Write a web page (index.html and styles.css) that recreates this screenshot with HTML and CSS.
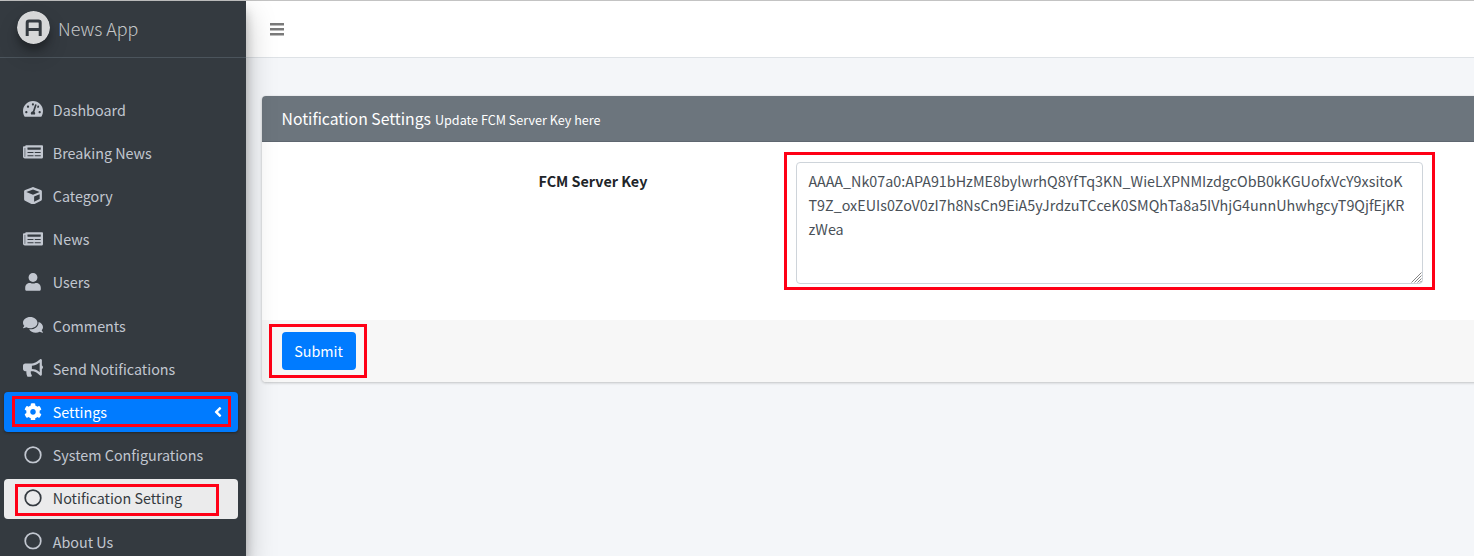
FILE: index.html
```html
<!DOCTYPE html>
<html lang="en">
<head>
<meta charset="utf-8">
<title>News App</title>
<link rel="stylesheet" href="styles.css">
</head>
<body>
<svg class="defs" width="0" height="0" aria-hidden="true">
  <symbol id="newspaper" viewBox="0 0 576 512"><path d="M552 64H88c-13.255 0-24 10.745-24 24v8H24c-13.255 0-24 10.745-24 24v272c0 30.928 25.072 56 56 56h472c26.51 0 48-21.49 48-48V88c0-13.255-10.745-24-24-24zM56 400a8 8 0 0 1-8-8V144h16v248a8 8 0 0 1-8 8zm236-16H140c-6.627 0-12-5.373-12-12v-8c0-6.627 5.373-12 12-12h152c6.627 0 12 5.373 12 12v8c0 6.627-5.373 12-12 12zm208 0H348c-6.627 0-12-5.373-12-12v-8c0-6.627 5.373-12 12-12h152c6.627 0 12 5.373 12 12v8c0 6.627-5.373 12-12 12zm-208-96H140c-6.627 0-12-5.373-12-12v-8c0-6.627 5.373-12 12-12h152c6.627 0 12 5.373 12 12v8c0 6.627-5.373 12-12 12zm208 0H348c-6.627 0-12-5.373-12-12v-8c0-6.627 5.373-12 12-12h152c6.627 0 12 5.373 12 12v8c0 6.627-5.373 12-12 12zm0-96H140c-6.627 0-12-5.373-12-12v-40c0-6.627 5.373-12 12-12h360c6.627 0 12 5.373 12 12v40c0 6.627-5.373 12-12 12z"/></symbol>
  <symbol id="circle" viewBox="0 0 512 512"><circle cx="256" cy="256" r="224" fill="none" stroke="currentColor" stroke-width="50"/></symbol>
</svg>
<div class="app">
  <aside class="sidebar">
    <div class="brand">
      <svg class="logo" viewBox="0 0 33 33"><circle cx="16.5" cy="16.5" r="16.5" fill="#d6d7d8"/><path d="M10.2 25V11.9q0-1.8 1.8-1.8h9.4q1.8 0 1.8 1.8V25M10.2 18.4h13" fill="none" stroke="#343a40" stroke-width="3"/></svg>
      <span class="brand-text">News App</span>
    </div>
    <nav class="menu">
      <a class="item"><svg class="icon" viewBox="0 0 576 512"><path d="M288 32C128.94 32 0 160.94 0 320c0 52.8 14.25 102.26 39.06 144.8 5.61 9.62 16.3 15.2 27.44 15.2h443c11.14 0 21.83-5.58 27.44-15.2C561.75 422.26 576 372.8 576 320c0-159.06-128.94-288-288-288zm0 64c14.71 0 26.58 10.13 30.32 23.65-1.11 2.26-2.64 4.23-3.45 6.67l-9.22 27.67c-5.13 3.49-10.97 6.01-17.64 6.01-17.67 0-32-14.33-32-32S270.33 96 288 96zM96 384c-17.67 0-32-14.33-32-32s14.33-32 32-32 32 14.33 32 32-14.33 32-32 32zm48-160c-17.67 0-32-14.33-32-32s14.33-32 32-32 32 14.33 32 32-14.33 32-32 32zm246.77-72.41l-61.33 184C343.13 347.33 352 364.54 352 384c0 11.72-3.38 22.55-8.88 32H232.88c-5.5-9.45-8.88-20.28-8.88-32 0-33.94 26.5-61.43 59.9-63.59l61.34-184.01c4.17-12.56 17.73-19.45 30.36-15.17 12.57 4.19 19.35 17.79 15.17 30.36zm14.66 57.2l15.52-46.55c3.47-1.29 7.13-2.23 11.05-2.23 17.67 0 32 14.33 32 32s-14.33 32-32 32c-11.38-.01-20.89-6.28-26.57-15.22zM480 384c-17.67 0-32-14.33-32-32s14.33-32 32-32 32 14.33 32 32-14.33 32-32 32z"/></svg><span>Dashboard</span></a>
      <a class="item"><svg class="icon"><use href="#newspaper"/></svg><span>Breaking News</span></a>
      <a class="item"><svg class="icon" viewBox="0 0 512 512"><path d="M239.1 6.3l-208 78c-18.7 7-31.1 25-31.1 45v225.1c0 18.2 10.3 34.8 26.5 42.9l208 104c13.5 6.8 29.4 6.8 42.9 0l208-104c16.3-8.1 26.5-24.8 26.5-42.9V129.3c0-20-12.4-37.9-31.1-44.9l-208-78C262 2.2 250 2.2 239.1 6.3zM256 68.4l192 72v1.1l-192 78-192-78v-1.1l192-72zm32 356V275.5l160-65v133.9l-160 80z"/></svg><span>Category</span></a>
      <a class="item"><svg class="icon"><use href="#newspaper"/></svg><span>News</span></a>
      <a class="item"><svg class="icon" viewBox="0 0 448 512"><path d="M224 256c70.7 0 128-57.3 128-128S294.7 0 224 0 96 57.3 96 128s57.3 128 128 128zm89.6 32h-16.7c-22.2 10.2-46.9 16-72.9 16s-50.6-5.8-72.9-16h-16.7C60.2 288 0 348.2 0 422.4V464c0 26.5 21.5 48 48 48h352c26.5 0 48-21.5 48-48v-41.6c0-74.2-60.2-134.4-134.4-134.4z"/></svg><span>Users</span></a>
      <a class="item"><svg class="icon" viewBox="0 0 576 512"><path d="M416 192c0-88.4-93.1-160-208-160S0 103.6 0 192c0 34.3 14.1 65.9 38 92-13.4 30.2-35.5 54.2-35.8 54.5-2.2 2.3-2.8 5.7-1.5 8.7S4.8 352 8 352c36.6 0 66.9-12.3 88.7-25 32.2 15.7 70.3 25 111.3 25 114.9 0 208-71.6 208-160zm122 220c23.9-26 38-57.7 38-92 0-66.9-53.5-124.2-129.3-148.1.9 6.6 1.3 13.3 1.3 20.1 0 105.9-107.7 192-240 192-10.8 0-21.3-.8-31.7-1.9C207.8 439.6 281.8 480 368 480c41 0 79.1-9.2 111.3-25 21.8 12.7 52.1 25 88.7 25 3.2 0 6.1-1.9 7.3-4.8 1.3-2.9.7-6.3-1.5-8.7-.3-.3-22.4-24.2-35.8-54.5z"/></svg><span>Comments</span></a>
      <a class="item"><svg class="icon" viewBox="0 0 576 512"><path d="M576 240c0-23.63-12.95-44.04-32-55.12V32.01C544 23.26 537.02 0 512 0c-7.12 0-14.19 2.38-19.98 7.02l-85.03 68.03C364.28 109.19 310.66 128 256 128H64c-35.35 0-64 28.65-64 64v96c0 35.35 28.65 64 64 64h33.7c-1.39 10.48-2.18 21.14-2.18 32 0 39.77 9.26 77.35 25.56 110.94 5.19 10.69 16.52 17.06 28.4 17.06h74.28c26.05 0 41.69-29.84 25.9-50.56-16.4-21.52-26.15-48.36-26.15-77.44 0-11.11 1.62-21.79 4.41-32H256c54.66 0 108.28 18.81 150.98 52.95l85.03 68.03a32.023 32.023 0 0 0 19.98 7.02c24.92 0 32-22.78 32-32V295.13C563.05 284.04 576 263.63 576 240zm-96 141.42l-33.05-26.44C392.95 311.78 325.12 288 256 288v-96c69.12 0 136.95-23.78 190.95-66.98L480 98.58v282.84z"/></svg><span>Send Notifications</span></a>
      <a class="item active"><svg class="icon" viewBox="0 0 512 512"><path d="M487.4 315.7l-42.6-24.6c4.3-23.2 4.3-47 0-70.2l42.6-24.6c4.9-2.8 7.1-8.6 5.5-14-11.1-35.6-30-67.8-54.7-94.6-3.8-4.1-10-5.1-14.8-2.3L380.8 110c-17.9-15.4-38.5-27.3-60.8-35.1V25.8c0-5.6-3.9-10.5-9.4-11.7-36.7-8.2-74.3-7.8-109.2 0-5.5 1.2-9.4 6.1-9.4 11.7V75c-22.2 7.9-42.8 19.8-60.8 35.1L88.7 85.5c-4.9-2.8-11-1.9-14.8 2.3-24.7 26.7-43.6 58.9-54.7 94.6-1.7 5.4.6 11.2 5.5 14L67.3 221c-4.3 23.2-4.3 47 0 70.2l-42.6 24.6c-4.9 2.8-7.1 8.6-5.5 14 11.1 35.6 30 67.8 54.7 94.6 3.8 4.1 10 5.1 14.8 2.3l42.6-24.6c17.9 15.4 38.5 27.3 60.8 35.1v49.2c0 5.6 3.9 10.5 9.4 11.7 36.7 8.2 74.3 7.8 109.2 0 5.5-1.2 9.4-6.1 9.4-11.7v-49.2c22.2-7.9 42.8-19.8 60.8-35.1l42.6 24.6c4.9 2.8 11 1.9 14.8-2.3 24.7-26.7 43.6-58.9 54.7-94.6 1.5-5.5-.7-11.3-5.6-14.1zM256 336c-44.1 0-80-35.9-80-80s35.9-80 80-80 80 35.9 80 80-35.9 80-80 80z"/></svg><span>Settings</span><svg class="caret" viewBox="0 0 256 512"><path d="M31.7 239l136-136c9.4-9.4 24.6-9.4 33.9 0l22.6 22.6c9.4 9.4 9.4 24.6 0 33.9L127.9 256l96.4 96.4c9.4 9.4 9.4 24.6 0 33.9L201.7 409c-9.4 9.4-24.6 9.4-33.9 0l-136-136c-9.5-9.4-9.5-24.6-.1-34z"/></svg><i class="mark mark-settings"></i></a>
      <a class="item"><svg class="icon"><use href="#circle"/></svg><span>System Configurations</span></a>
      <a class="item current"><svg class="icon"><use href="#circle"/></svg><span>Notification Setting</span><i class="mark mark-notification"></i></a>
      <a class="item"><svg class="icon"><use href="#circle"/></svg><span>About Us</span></a>
    </nav>
  </aside>
  <div class="main">
    <header class="topbar"><svg class="bars" viewBox="0 0 14 13"><path d="M0 0h14v2.4H0zM0 5h14v2.4H0zM0 10h14v2.4H0z"/></svg></header>
    <section class="card">
      <div class="card-header"><span class="title">Notification Settings</span><small>Update FCM Server Key here</small></div>
      <div class="card-body">
        <label class="label" for="key">FCM Server Key</label>
        <div class="field"><textarea id="key" spellcheck="false">AAAA_Nk07a0:APA91bHzME8bylwrhQ8YfTq3KN_WieLXPNMIzdgcObB0kKGUofxVcY9xsitoK
T9Z_oxEUIs0ZoV0zI7h8NsCn9EiA5yJrdzuTCceK0SMQhTa8a5IVhjG4unnUhwhgcyT9QjfEjKR
zWea</textarea><svg class="grip" viewBox="0 0 11 11"><path d="M.5 10.5l10-10M3.5 10.5l7-7M6.5 10.5l4-4M9 10.5l1.5-1.5"/></svg><i class="mark mark-field"></i></div>
      </div>
      <div class="card-footer"><div class="action"><button class="submit">Submit</button><i class="mark mark-submit"></i></div></div>
    </section>
  </div>
</div>
</body>
</html>
```

FILE: styles.css
```css
* { box-sizing: border-box; }
body {
  margin: 0;
  height: 556px;
  overflow: hidden;
  background: #f4f6f9;
  color: #212529;
  font-family: "Source Sans Pro", "Noto Sans CJK SC", sans-serif;
  font-size: 14.33px;
  line-height: 24px;
  white-space: nowrap;
}
.defs { position: absolute; }
.app { display: flex; height: 556px; border-top: 1px solid #c3c3c3; }
.sidebar {
  position: relative;
  z-index: 2;
  flex: none;
  width: 246px;
  background: #343a40;
  box-shadow: 0 14px 28px rgba(0,0,0,.25), 0 10px 10px rgba(0,0,0,.22);
}
.brand {
  display: flex;
  align-items: flex-start;
  gap: 8px;
  height: 57px;
  padding: 10px 0 0 17px;
  border-bottom: 1px solid #4b545c;
}
.logo { width: 33px; height: 33px; border-radius: 50%; box-shadow: 0 10px 20px rgba(0,0,0,.19), 0 6px 6px rgba(0,0,0,.23); }
.brand-text { margin-top: 5px; color: rgba(255,255,255,.72); font-size: 17.9px; font-weight: 300; }
.menu { display: flex; flex-direction: column; gap: 3.2px; padding: 31.65px 8px 0 4px; }
.item {
  position: relative;
  display: flex;
  align-items: center;
  flex: none;
  height: 40px;
  padding-left: 19.4px;
  border-radius: 4px;
  color: #c2c7d0;
}
.icon { width: 20px; height: 17.8px; margin: -1px 9.4px 0 0; fill: currentColor; }
.active { background: #007bff; color: #fff; box-shadow: 0 1px 3px rgba(0,0,0,.12), 0 1px 2px rgba(0,0,0,.24); }
.current { margin: .4px 0 -.4px; background: rgba(255,255,255,.9); color: #343a40; }
.current span { margin-top: -1.6px; }
.caret { width: 8px; height: 16px; margin: 0 16px 0 auto; fill: currentColor; }
.main { flex: 1; min-width: 0; }
.topbar { display: flex; height: 57px; padding: 22px 24px; background: #fff; border-bottom: 1px solid #dee2e6; }
.bars { width: 14px; height: 13px; fill: #7a7a7a; }
.card {
  width: 1260px;
  margin: 38px 0 0 16px;
  border-radius: 4px;
  background: #fff;
  box-shadow: 0 0 1px rgba(0,0,0,.125), 0 1px 3px rgba(0,0,0,.2);
}
.card-header {
  display: flex;
  align-items: baseline;
  gap: 4px;
  height: 46px;
  padding: 11px 19.5px;
  border-bottom: 1px solid #5f6770;
  border-radius: 4px 4px 0 0;
  background: #6c757d;
  color: #fff;
}
.title { font-size: 15.75px; }
small { font-size: 12.6px; }
.card-body { display: flex; height: 178px; padding: 20px 20px 0 276.5px; }
.label { width: 257.5px; padding-top: 7px; font-weight: 700; }
.field { position: relative; width: 627px; height: 122px; }
textarea {
  display: block;
  width: 627px;
  height: 122px;
  padding: 6px 11.5px;
  border: 1px solid #ced4da;
  border-radius: 4px;
  background: #fff;
  color: #495057;
  font: inherit;
  line-height: 24px;
  white-space: pre;
  overflow: hidden;
  resize: none;
}
.grip { position: absolute; right: 1px; bottom: 1px; width: 11px; height: 11px; fill: none; stroke: #777; stroke-width: .9; }
.card-footer { height: 62px; padding: 12px 20px; border-radius: 0 0 4px 4px; background: #f7f7f7; }
.action { position: relative; width: 74px; }
.submit { display: block; width: 74px; height: 38px; padding: 0 1px 0 0; border: 0; border-radius: 4px; background: #007bff; color: #fff; font: inherit; }
/* Highlight frames laid over the controls */
.mark { position: absolute; border: 3px solid #ff0016; pointer-events: none; }
.mark-settings { left: 8px; top: 4px; width: 219px; height: 31px; }
.mark-notification { left: 11px; top: 5px; width: 204px; height: 32px; }
.mark-field { left: -12px; top: -10px; width: 651px; height: 138px; }
.mark-submit { left: -13px; top: -8px; width: 98px; height: 54px; }
```
